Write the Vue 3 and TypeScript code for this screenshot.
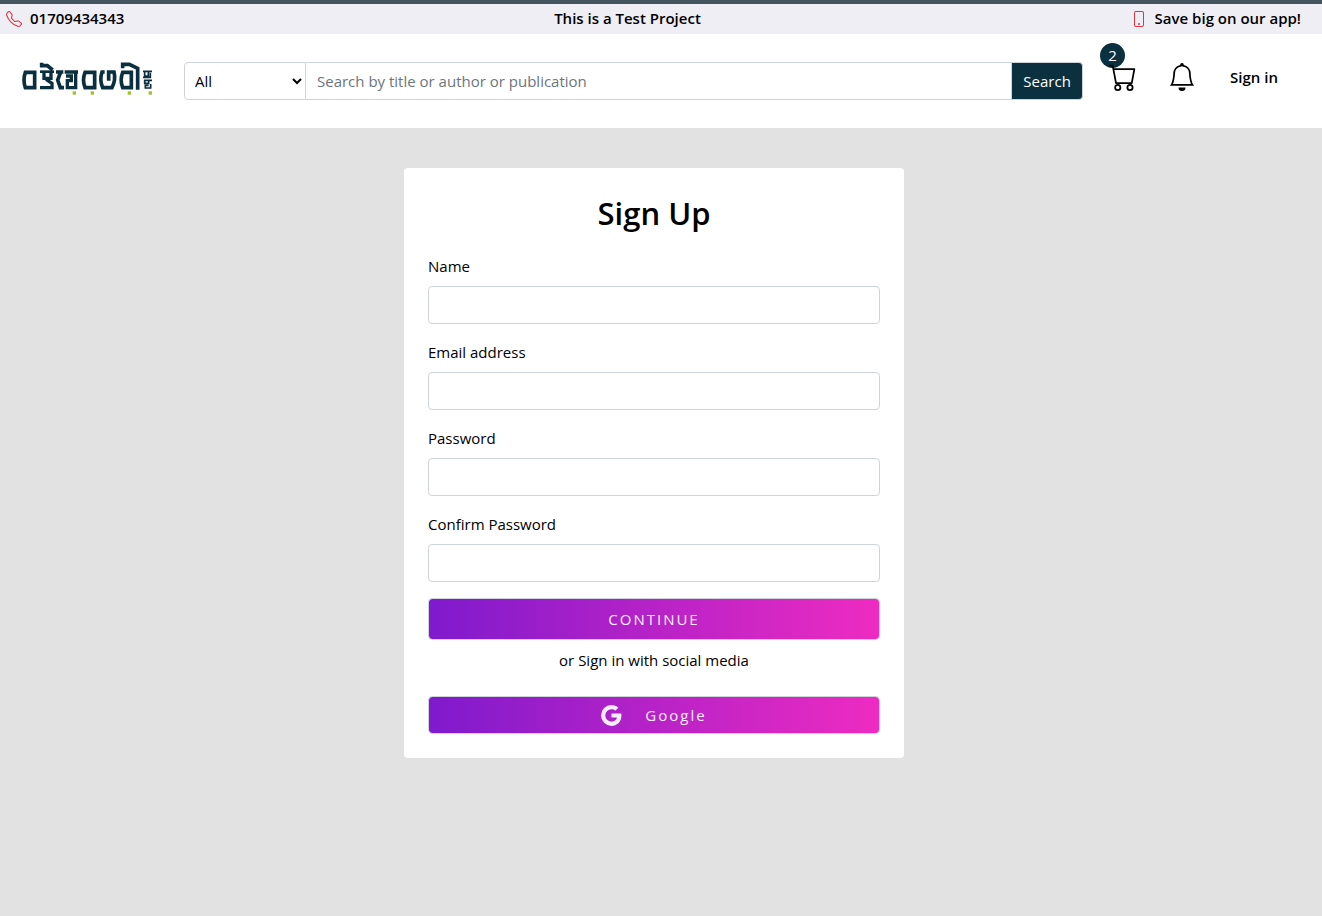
<script setup lang="ts">
import { ref } from 'vue'

interface Field {
  id: string
  label: string
  type: string
}

const fields: Field[] = [
  { id: 'name', label: 'Name', type: 'text' },
  { id: 'email', label: 'Email address', type: 'email' },
  { id: 'password', label: 'Password', type: 'password' },
  { id: 'confirm', label: 'Confirm Password', type: 'password' },
]

const values = ref<Record<string, string>>({ name: '', email: '', password: '', confirm: '' })
const category = ref('All')
const query = ref('')
const cartCount = ref(2)
</script>

<template>
  <div class="page">
    <div class="topbar">
      <span class="topbar-item">
        <svg class="small-icon" viewBox="0 0 16 16" fill="currentColor" aria-hidden="true">
          <path d="M3.654 1.328a.678.678 0 0 0-1.015-.063L1.605 2.3c-.483.484-.661 1.169-.45 1.77a17.568 17.568 0 0 0 4.168 6.608 17.569 17.569 0 0 0 6.608 4.168c.601.211 1.286.033 1.77-.45l1.034-1.034a.678.678 0 0 0-.063-1.015l-2.307-1.794a.678.678 0 0 0-.58-.122l-2.19.547a1.745 1.745 0 0 1-1.657-.459L5.482 8.062a1.745 1.745 0 0 1-.46-1.657l.548-2.19a.678.678 0 0 0-.122-.58L3.654 1.328zM1.884.511a1.745 1.745 0 0 1 2.612.163L6.29 2.98c.329.423.445.974.315 1.494l-.547 2.19a.678.678 0 0 0 .178.643l2.457 2.457a.678.678 0 0 0 .644.178l2.189-.547a1.745 1.745 0 0 1 1.494.315l2.306 1.794c.829.645.905 1.87.163 2.611l-1.034 1.034c-.74.74-1.846 1.065-2.877.702a18.634 18.634 0 0 1-7.01-4.42 18.634 18.634 0 0 1-4.42-7.009c-.362-1.03-.037-2.137.703-2.877L1.885.511z" />
        </svg>
        01709434343
      </span>
      <span>This is a Test Project</span>
      <span class="topbar-item">
        <svg class="small-icon" viewBox="0 0 16 16" fill="currentColor" aria-hidden="true">
          <path d="M11 1a1 1 0 0 1 1 1v12a1 1 0 0 1-1 1H5a1 1 0 0 1-1-1V2a1 1 0 0 1 1-1h6zM5 0a2 2 0 0 0-2 2v12a2 2 0 0 0 2 2h6a2 2 0 0 0 2-2V2a2 2 0 0 0-2-2H5z" />
          <path d="M8 14a1 1 0 1 0 0-2 1 1 0 0 0 0 2z" />
        </svg>
        Save big on our app!
      </span>
    </div>

    <header class="header">
      <a href="#" class="logo" aria-label="Home">
        <svg viewBox="66 184 396 102" fill="none" aria-hidden="true">
          <g stroke="#0a2f3f" stroke-width="11">
            <path d="M76 215H104V261H76Q68 238 76 215Z" />
            <path d="M125 186V195H142L158 208" />
            <path d="M120 213H162" stroke-width="8" />
            <path d="M132 214V233H153V214M138 236L156 248V261H120" stroke-width="10" />
            <path d="M168 214H190M182 214L173 238L181 261H192" />
            <path d="M194 214H234M227 214V261H202V240H214V226H198" stroke-width="10" />
            <path d="M255 215H284V261H255Q246 238 255 215Z" />
            <path d="M314 214H306Q298 238 308 261H336Q348 238 342 214H326V240" />
            <path d="M368 215H394V261H368Q359 238 368 215Z" />
            <path d="M368 203V191H388L413 203V267" />
          </g>
          <g stroke="#0a2f3f" stroke-width="5">
            <path d="M429 212H456M434 212V226H445V212M451 216V230H429" />
            <path d="M456 239H434V248H446V239M446 254H436V262H452V250" />
          </g>
          <g fill="#9dc22b">
            <rect x="218" y="272" width="10" height="10" />
            <rect x="272" y="272" width="10" height="10" />
            <rect x="383" y="272" width="10" height="10" />
            <rect x="446" y="272" width="10" height="10" />
          </g>
        </svg>
      </a>

      <form class="search" role="search" @submit.prevent>
        <select v-model="category" class="search-select" aria-label="Category">
          <option>All</option>
          <option>Title</option>
          <option>Author</option>
          <option>Publication</option>
        </select>
        <input
          v-model="query"
          class="search-input"
          type="text"
          placeholder="Search by title or author or publication"
          aria-label="Search by title or author or publication"
        />
        <button class="search-button" type="submit">Search</button>
      </form>

      <nav class="actions">
        <a href="#" class="cart" aria-label="Cart">
          <span class="badge">{{ cartCount }}</span>
          <svg class="large-icon" viewBox="0 0 16 16" fill="currentColor" aria-hidden="true">
            <path d="M0 1.5A.5.5 0 0 1 .5 1H2a.5.5 0 0 1 .485.379L2.89 3H14.5a.5.5 0 0 1 .491.592l-1.5 8A.5.5 0 0 1 13 12H4a.5.5 0 0 1-.491-.408L2.01 3.607 1.61 2H.5a.5.5 0 0 1-.5-.5zM3.102 4l1.313 7h8.17l1.313-7H3.102zM5 12a2 2 0 1 0 0 4 2 2 0 0 0 0-4zm7 0a2 2 0 1 0 0 4 2 2 0 0 0 0-4zm-7 1a1 1 0 1 1 0 2 1 1 0 0 1 0-2zm7 0a1 1 0 1 1 0 2 1 1 0 0 1 0-2z" />
          </svg>
        </a>
        <a href="#" class="bell" aria-label="Notifications">
          <svg class="large-icon" viewBox="0 0 16 16" fill="currentColor" aria-hidden="true">
            <path d="M8 16a2 2 0 0 0 2-2H6a2 2 0 0 0 2 2zM8 1.918l-.797.161A4.002 4.002 0 0 0 4 6c0 .628-.134 2.197-.459 3.742-.16.767-.376 1.566-.663 2.258h10.244c-.287-.692-.502-1.49-.663-2.258C12.134 8.197 12 6.628 12 6a4.002 4.002 0 0 0-3.203-3.92L8 1.917zM14.22 12c.223.447.481.801.78 1H1c.299-.199.557-.553.78-1C2.68 10.2 3 6.88 3 6c0-2.42 1.72-4.44 4.005-4.901a1 1 0 1 1 1.99 0A5.002 5.002 0 0 1 13 6c0 .88.32 4.2 1.22 6z" />
          </svg>
        </a>
        <a href="#" class="sign-in">Sign in</a>
      </nav>
    </header>

    <main class="main">
      <form class="card" @submit.prevent>
        <h1>Sign Up</h1>
        <div v-for="field in fields" :key="field.id" class="field">
          <label :for="field.id">{{ field.label }}</label>
          <input :id="field.id" v-model="values[field.id]" :type="field.type" />
        </div>
        <button class="gradient-button continue" type="submit">CONTINUE</button>
        <p>or Sign in with social media</p>
        <button class="gradient-button google" type="button">
          <svg viewBox="3 3 18 18" fill="currentColor" aria-hidden="true">
            <path d="M20.283 10.356h-8.327v3.451h4.792c-.446 2.193-2.313 3.453-4.792 3.453a5.27 5.27 0 0 1-5.279-5.28 5.27 5.27 0 0 1 5.279-5.279c1.259 0 2.397.447 3.29 1.178l2.6-2.599c-1.584-1.381-3.615-2.233-5.89-2.233a8.908 8.908 0 0 0-8.934 8.934 8.907 8.907 0 0 0 8.934 8.934c4.467 0 8.529-3.249 8.529-8.934 0-.528-.081-1.097-.202-1.625z" />
          </svg>
          Google
        </button>
      </form>
    </main>
  </div>
</template>

<style>
body {
  margin: 0;
  background: #e2e2e2;
}
</style>

<style scoped>
.page,
.page * {
  box-sizing: border-box;
}

.page {
  min-height: 100vh;
  font-family: "Open Sans", "Noto Sans", sans-serif;
  font-size: 15px;
  line-height: 24px;
  color: #000;
  background: #e2e2e2;
}

a {
  color: inherit;
  text-decoration: none;
}

input,
select,
button {
  font: inherit;
  margin: 0;
}

.topbar {
  display: flex;
  justify-content: space-between;
  align-items: center;
  height: 34px;
  padding: 0 21px 2px 6px;
  border-top: 4px solid #455560;
  background: #efeef4;
  font-weight: 600;
}

.topbar-item {
  display: flex;
  align-items: center;
  gap: 8px;
}

.small-icon {
  width: 16px;
  height: 16px;
  margin-top: 2px;
  color: #dc3545;
}

.header {
  display: flex;
  align-items: flex-start;
  height: 94px;
  padding: 28px 44px 0 22px;
  background: #fff;
}

.logo svg {
  display: block;
  width: 132px;
  height: 34px;
}

.search {
  display: flex;
  flex: 1;
  height: 38px;
  margin-left: 30px;
}

.search-select {
  width: 122px;
  padding: 0 0 0 6px;
  border: 1px solid #ced4da;
  border-radius: 4px 0 0 4px;
  background: #fff;
  color: #000;
}

.search-input {
  flex: 1;
  min-width: 0;
  padding: 0 11px;
  border: solid #ced4da;
  border-width: 1px 0;
  background: #fff;
}

.search-input::placeholder {
  color: #6c757d;
  opacity: 1;
}

.search-button {
  width: 72px;
  padding: 0;
  border: 1px solid #ced4da;
  border-radius: 0 4px 4px 0;
  background: #0b3040;
  color: #fff;
}

.actions {
  display: flex;
  align-items: center;
  height: 30px;
  margin-left: 26px;
  font-weight: 600;
}

.cart {
  position: relative;
}

.large-icon {
  position: relative;
  display: block;
  width: 28px;
  height: 28px;
}

.badge {
  position: absolute;
  top: -20px;
  left: -9px;
  width: 25px;
  height: 25px;
  border-radius: 50%;
  background: #0b3040;
  color: #fff;
  font-weight: 400;
  line-height: 25px;
  text-align: center;
}

.bell {
  margin: 0 34px 0 31px;
}

.main {
  padding: 40px 14px 40px 0;
}

.card {
  max-width: 500px;
  margin: 0 auto;
  padding: 24px;
  border-radius: 4px;
  background: #fff;
}

h1 {
  margin: 0 0 20px;
  font-size: 31px;
  font-weight: 600;
  line-height: 42px;
  text-align: center;
}

.field {
  margin-bottom: 16px;
}

.field label {
  display: block;
  margin-bottom: 8px;
}

.field input {
  display: block;
  width: 100%;
  height: 38px;
  padding: 6px 12px;
  border: 1px solid #ced4da;
  border-radius: 4px;
  background: #fff;
}

p {
  margin: 8px 0 24px;
  text-align: center;
}

.gradient-button {
  display: flex;
  align-items: center;
  justify-content: center;
  width: 100%;
  padding: 0;
  border: 1px solid #ced4da;
  border-radius: 4px;
  background: linear-gradient(to right, #7f1acd, #ee2bc1) padding-box;
  color: #f5eefa;
  letter-spacing: 2px;
}

.continue {
  height: 42px;
}

.google {
  height: 38px;
}

.google svg {
  width: 21px;
  height: 21px;
  margin-right: 23px;
}
</style>
